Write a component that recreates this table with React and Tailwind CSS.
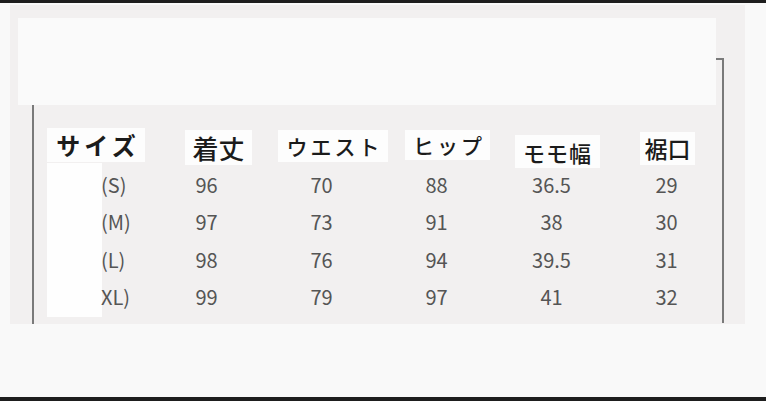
const headers = [
  { label: "サイズ", box: "ml-[37px] mt-[23px] w-[98px] h-[34px]", text: "text-[24px] font-semibold tracking-[4px] pl-[4px]" },
  { label: "着丈", box: "ml-[40px] mt-[25px] w-[67px] h-[35px]", text: "text-[26px] font-medium" },
  { label: "ウエスト", box: "ml-[26px] mt-[25px] w-[110px] h-[32px]", text: "text-[21px] font-medium tracking-[3px] pl-[3px]" },
  { label: "ヒップ", box: "ml-[17px] mt-[25px] w-[85px] h-[30px]", text: "text-[21px] font-medium tracking-[3px] pl-[3px]" },
  { label: "モモ幅", box: "ml-[25px] mt-[30px] w-[85px] h-[33px]", text: "text-[22px] font-medium tracking-[1px]" },
  { label: "裾口", box: "ml-[40px] mt-[27px] w-[55px] h-[33px]", text: "text-[23px] font-medium" },
]

const rows = [
  ["(S)", "96", "70", "88", "36.5", "29"],
  ["(M)", "97", "73", "91", "38", "30"],
  ["(L)", "98", "76", "94", "39.5", "31"],
  ["XL)", "99", "79", "97", "41", "32"],
]

export default function App() {
  return (
    <div className="w-[766px] h-[401px] bg-[#f9f9f9] flex flex-col font-['Noto_Sans','Noto_Sans_CJK_JP',sans-serif] overflow-hidden">
      <div className="h-[3px] bg-[#1e1e1e]" />

      <div className="flex-1 pt-[2px]">
        <div className="relative ml-[10px] w-[735px] h-[319px] bg-[#f2f0f0] pt-[13px]">
          {/* top blank area */}
          <div className="ml-[8px] w-[698px] h-[87px] bg-[#fafafa]" />

          {/* size chart */}
          <div className="h-[219px]">
            <div className="flex items-start h-[61px]">
              {headers.map(h => (
                <div key={h.label} className={`${h.box} bg-[#fdfdfd] flex items-center justify-center shrink-0`}>
                  <span className={`${h.text} text-[#1b1b1b] font-['Noto_Sans_CJK_JP',sans-serif] leading-none`}>{h.label}</span>
                </div>
              ))}
            </div>

            <div className="flex items-start">
              <div className="ml-[37px] -mt-[3px] w-[55px] h-[154px] bg-[#fefefe] shrink-0" />
              <div className="flex flex-col">
                {rows.map(r => (
                  <div key={r[0]} className="flex items-center h-[37.5px] text-[20px] text-[#555] font-['Noto_Sans_CJK_JP',sans-serif]">
                    <div className="w-[48px] -ml-[1px]">{r[0]}</div>
                    {r.slice(1).map((v, i) => (
                      <div key={i} className="w-[115px] text-center">{v}</div>
                    ))}
                  </div>
                ))}
              </div>
            </div>
          </div>

          {/* bracket lines */}
          <div className="absolute left-[22px] top-[100px] w-[1.5px] h-[219px] bg-[#7a7a7a]" />
          <div className="absolute left-[712px] top-[53px] w-[1.5px] h-[265px] bg-[#7a7a7a]" />
          <div className="absolute left-[706px] top-[53px] w-[7px] h-[1.5px] bg-[#7a7a7a]" />
        </div>
      </div>

      <div className="h-[4px] bg-[#1e1e1e]" />
    </div>
  )
}
